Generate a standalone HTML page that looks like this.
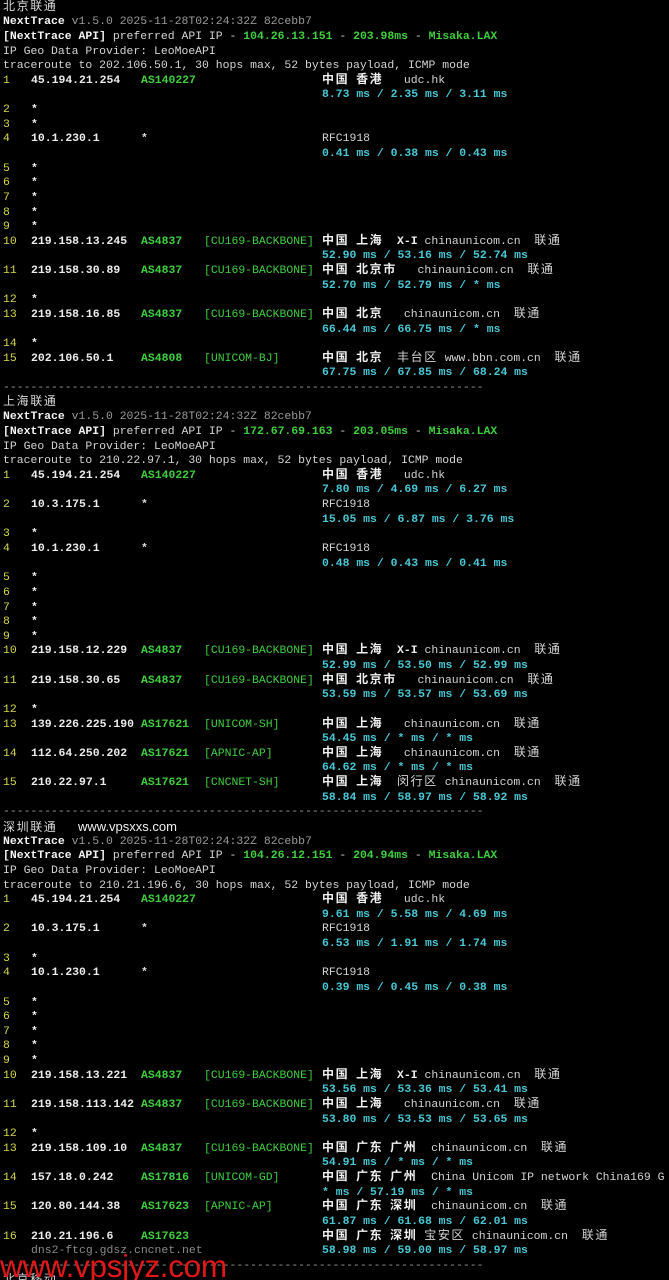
<!DOCTYPE html>
<html><head><meta charset="utf-8">
<style>
html,body{margin:0;padding:0;background:#000;width:669px;height:1280px;overflow:hidden}
body{position:relative;box-sizing:border-box;font-family:"Liberation Mono",monospace;font-size:11.45px;color:#d4d4d4}
.l{position:absolute;left:3px;height:14.63px;line-height:14.63px;white-space:pre;overflow:visible}
i{font-style:normal;font-family:"Noto Sans CJK SC",sans-serif;font-size:12px;letter-spacing:1.6px;line-height:0;vertical-align:baseline}
.t i{font-weight:normal;color:#d8d8d8}
.n,.ip,.as,.nt,.d{display:inline-block;line-height:14.63px;vertical-align:top}
.n{width:28px;color:#d6d64a}
.ip{width:110px;font-weight:bold;color:#ececec}
.as{width:63px;font-weight:bold;color:#3fcf3f}
.nt{width:118px;color:#3fcf3f}
.d{width:291px;color:#8a8a8a}
.geo{font-weight:bold;color:#f0f0f0}
.geo s{text-decoration:none;font-weight:normal;color:#d4d4d4}
.r{display:inline-block;padding-left:319px;color:#48c8d6;font-weight:bold;vertical-align:top}
.c{color:#48c8d6;font-weight:bold}
.b{font-weight:bold;color:#f4f4f4}
.g{color:#9a9a9a}
.G{color:#3fcf3f;font-weight:bold}
.dash{color:#9a9a9a}
.wm{position:absolute;left:0;top:1248px;font-family:"Liberation Sans",sans-serif;font-size:31.5px;color:#e01818;letter-spacing:-0.3px}
.vx{font-family:"Liberation Sans",sans-serif;font-size:13px;color:#f0f0f0}
</style></head><body>
<div class="l t"><i>北京联通</i></div>
<div class="l"><span class="b">NextTrace</span><span class="g"> v1.5.0 2025-11-28T02:24:32Z 82cebb7</span></div>
<div class="l"><span class="b">[NextTrace API]</span> preferred API IP - <span class="G">104.26.13.151</span> - <span class="G">203.98ms</span> - <span class="G">Misaka.LAX</span></div>
<div class="l">IP Geo Data Provider: LeoMoeAPI</div>
<div class="l">traceroute to 202.106.50.1, 30 hops max, 52 bytes payload, ICMP mode</div>
<div class="l"><span class="n">1</span><span class="ip">45.194.21.254</span><span class="as">AS140227</span><span class="nt"></span><span class="geo"><i>中国</i> <i>香港</i>   <s>udc.hk</s></span></div>
<div class="l"><span class="r">8.73 ms / 2.35 ms / 3.11 ms</span></div>
<div class="l"><span class="n">2</span><span class="ip">*</span></div>
<div class="l"><span class="n">3</span><span class="ip">*</span></div>
<div class="l"><span class="n">4</span><span class="ip">10.1.230.1</span><span class="as" style="color:#ddd">*</span><span class="nt"></span><span class="geo"><s>RFC1918</s></span></div>
<div class="l"><span class="r">0.41 ms / 0.38 ms / 0.43 ms</span></div>
<div class="l"><span class="n">5</span><span class="ip">*</span></div>
<div class="l"><span class="n">6</span><span class="ip">*</span></div>
<div class="l"><span class="n">7</span><span class="ip">*</span></div>
<div class="l"><span class="n">8</span><span class="ip">*</span></div>
<div class="l"><span class="n">9</span><span class="ip">*</span></div>
<div class="l"><span class="n">10</span><span class="ip">219.158.13.245</span><span class="as">AS4837</span><span class="nt">[CU169-BACKBONE]</span><span class="geo"><i>中国</i> <i>上海</i>  X-I <s>chinaunicom.cn  <i>联通</i></s></span></div>
<div class="l"><span class="r">52.90 ms / 53.16 ms / 52.74 ms</span></div>
<div class="l"><span class="n">11</span><span class="ip">219.158.30.89</span><span class="as">AS4837</span><span class="nt">[CU169-BACKBONE]</span><span class="geo"><i>中国</i> <i>北京市</i>   <s>chinaunicom.cn  <i>联通</i></s></span></div>
<div class="l"><span class="r">52.70 ms / 52.79 ms / * ms</span></div>
<div class="l"><span class="n">12</span><span class="ip">*</span></div>
<div class="l"><span class="n">13</span><span class="ip">219.158.16.85</span><span class="as">AS4837</span><span class="nt">[CU169-BACKBONE]</span><span class="geo"><i>中国</i> <i>北京</i>   <s>chinaunicom.cn  <i>联通</i></s></span></div>
<div class="l"><span class="r">66.44 ms / 66.75 ms / * ms</span></div>
<div class="l"><span class="n">14</span><span class="ip">*</span></div>
<div class="l"><span class="n">15</span><span class="ip">202.106.50.1</span><span class="as">AS4808</span><span class="nt">[UNICOM-BJ]</span><span class="geo"><i>中国</i> <i>北京</i>  <s><i>丰台区</i> www.bbn.com.cn  <i>联通</i></s></span></div>
<div class="l"><span class="r">67.75 ms / 67.85 ms / 68.24 ms</span></div>
<div class="l dash">----------------------------------------------------------------------</div>
<div class="l t"><i>上海联通</i></div>
<div class="l"><span class="b">NextTrace</span><span class="g"> v1.5.0 2025-11-28T02:24:32Z 82cebb7</span></div>
<div class="l"><span class="b">[NextTrace API]</span> preferred API IP - <span class="G">172.67.69.163</span> - <span class="G">203.05ms</span> - <span class="G">Misaka.LAX</span></div>
<div class="l">IP Geo Data Provider: LeoMoeAPI</div>
<div class="l">traceroute to 210.22.97.1, 30 hops max, 52 bytes payload, ICMP mode</div>
<div class="l"><span class="n">1</span><span class="ip">45.194.21.254</span><span class="as">AS140227</span><span class="nt"></span><span class="geo"><i>中国</i> <i>香港</i>   <s>udc.hk</s></span></div>
<div class="l"><span class="r">7.80 ms / 4.69 ms / 6.27 ms</span></div>
<div class="l"><span class="n">2</span><span class="ip">10.3.175.1</span><span class="as" style="color:#ddd">*</span><span class="nt"></span><span class="geo"><s>RFC1918</s></span></div>
<div class="l"><span class="r">15.05 ms / 6.87 ms / 3.76 ms</span></div>
<div class="l"><span class="n">3</span><span class="ip">*</span></div>
<div class="l"><span class="n">4</span><span class="ip">10.1.230.1</span><span class="as" style="color:#ddd">*</span><span class="nt"></span><span class="geo"><s>RFC1918</s></span></div>
<div class="l"><span class="r">0.48 ms / 0.43 ms / 0.41 ms</span></div>
<div class="l"><span class="n">5</span><span class="ip">*</span></div>
<div class="l"><span class="n">6</span><span class="ip">*</span></div>
<div class="l"><span class="n">7</span><span class="ip">*</span></div>
<div class="l"><span class="n">8</span><span class="ip">*</span></div>
<div class="l"><span class="n">9</span><span class="ip">*</span></div>
<div class="l"><span class="n">10</span><span class="ip">219.158.12.229</span><span class="as">AS4837</span><span class="nt">[CU169-BACKBONE]</span><span class="geo"><i>中国</i> <i>上海</i>  X-I <s>chinaunicom.cn  <i>联通</i></s></span></div>
<div class="l"><span class="r">52.99 ms / 53.50 ms / 52.99 ms</span></div>
<div class="l"><span class="n">11</span><span class="ip">219.158.30.65</span><span class="as">AS4837</span><span class="nt">[CU169-BACKBONE]</span><span class="geo"><i>中国</i> <i>北京市</i>   <s>chinaunicom.cn  <i>联通</i></s></span></div>
<div class="l"><span class="r">53.59 ms / 53.57 ms / 53.69 ms</span></div>
<div class="l"><span class="n">12</span><span class="ip">*</span></div>
<div class="l"><span class="n">13</span><span class="ip">139.226.225.190</span><span class="as">AS17621</span><span class="nt">[UNICOM-SH]</span><span class="geo"><i>中国</i> <i>上海</i>   <s>chinaunicom.cn  <i>联通</i></s></span></div>
<div class="l"><span class="r">54.45 ms / * ms / * ms</span></div>
<div class="l"><span class="n">14</span><span class="ip">112.64.250.202</span><span class="as">AS17621</span><span class="nt">[APNIC-AP]</span><span class="geo"><i>中国</i> <i>上海</i>   <s>chinaunicom.cn  <i>联通</i></s></span></div>
<div class="l"><span class="r">64.62 ms / * ms / * ms</span></div>
<div class="l"><span class="n">15</span><span class="ip">210.22.97.1</span><span class="as">AS17621</span><span class="nt">[CNCNET-SH]</span><span class="geo"><i>中国</i> <i>上海</i>  <s><i>闵行区</i> chinaunicom.cn  <i>联通</i></s></span></div>
<div class="l"><span class="r">58.84 ms / 58.97 ms / 58.92 ms</span></div>
<div class="l dash">----------------------------------------------------------------------</div>
<div class="l t"><i>深圳联通</i>   <span class="vx">www.vpsxxs.com</span></div>
<div class="l"><span class="b">NextTrace</span><span class="g"> v1.5.0 2025-11-28T02:24:32Z 82cebb7</span></div>
<div class="l"><span class="b">[NextTrace API]</span> preferred API IP - <span class="G">104.26.12.151</span> - <span class="G">204.94ms</span> - <span class="G">Misaka.LAX</span></div>
<div class="l">IP Geo Data Provider: LeoMoeAPI</div>
<div class="l">traceroute to 210.21.196.6, 30 hops max, 52 bytes payload, ICMP mode</div>
<div class="l"><span class="n">1</span><span class="ip">45.194.21.254</span><span class="as">AS140227</span><span class="nt"></span><span class="geo"><i>中国</i> <i>香港</i>   <s>udc.hk</s></span></div>
<div class="l"><span class="r">9.61 ms / 5.58 ms / 4.69 ms</span></div>
<div class="l"><span class="n">2</span><span class="ip">10.3.175.1</span><span class="as" style="color:#ddd">*</span><span class="nt"></span><span class="geo"><s>RFC1918</s></span></div>
<div class="l"><span class="r">6.53 ms / 1.91 ms / 1.74 ms</span></div>
<div class="l"><span class="n">3</span><span class="ip">*</span></div>
<div class="l"><span class="n">4</span><span class="ip">10.1.230.1</span><span class="as" style="color:#ddd">*</span><span class="nt"></span><span class="geo"><s>RFC1918</s></span></div>
<div class="l"><span class="r">0.39 ms / 0.45 ms / 0.38 ms</span></div>
<div class="l"><span class="n">5</span><span class="ip">*</span></div>
<div class="l"><span class="n">6</span><span class="ip">*</span></div>
<div class="l"><span class="n">7</span><span class="ip">*</span></div>
<div class="l"><span class="n">8</span><span class="ip">*</span></div>
<div class="l"><span class="n">9</span><span class="ip">*</span></div>
<div class="l"><span class="n">10</span><span class="ip">219.158.13.221</span><span class="as">AS4837</span><span class="nt">[CU169-BACKBONE]</span><span class="geo"><i>中国</i> <i>上海</i>  X-I <s>chinaunicom.cn  <i>联通</i></s></span></div>
<div class="l"><span class="r">53.56 ms / 53.36 ms / 53.41 ms</span></div>
<div class="l"><span class="n">11</span><span class="ip">219.158.113.142</span><span class="as">AS4837</span><span class="nt">[CU169-BACKBONE]</span><span class="geo"><i>中国</i> <i>上海</i>   <s>chinaunicom.cn  <i>联通</i></s></span></div>
<div class="l"><span class="r">53.80 ms / 53.53 ms / 53.65 ms</span></div>
<div class="l"><span class="n">12</span><span class="ip">*</span></div>
<div class="l"><span class="n">13</span><span class="ip">219.158.109.10</span><span class="as">AS4837</span><span class="nt">[CU169-BACKBONE]</span><span class="geo"><i>中国</i> <i>广东</i> <i>广州</i>  <s>chinaunicom.cn  <i>联通</i></s></span></div>
<div class="l"><span class="r">54.91 ms / * ms / * ms</span></div>
<div class="l"><span class="n">14</span><span class="ip">157.18.0.242</span><span class="as">AS17816</span><span class="nt">[UNICOM-GD]</span><span class="geo"><i>中国</i> <i>广东</i> <i>广州</i>  <s>China Unicom IP network China169 G</s></span></div>
<div class="l"><span class="r">* ms / 57.19 ms / * ms</span></div>
<div class="l"><span class="n">15</span><span class="ip">120.80.144.38</span><span class="as">AS17623</span><span class="nt">[APNIC-AP]</span><span class="geo"><i>中国</i> <i>广东</i> <i>深圳</i>  <s>chinaunicom.cn  <i>联通</i></s></span></div>
<div class="l"><span class="r">61.87 ms / 61.68 ms / 62.01 ms</span></div>
<div class="l"><span class="n">16</span><span class="ip">210.21.196.6</span><span class="as">AS17623</span><span class="nt"></span><span class="geo"><i>中国</i> <i>广东</i> <i>深圳</i> <s><i>宝安区</i> chinaunicom.cn  <i>联通</i></s></span></div>
<div class="l"><span class="n"></span><span class="d">dns2-ftcg.gdsz.cncnet.net</span><span class="c">58.98 ms / 59.00 ms / 58.97 ms</span></div>
<div class="l dash">----------------------------------------------------------------------</div>
<div class="l t"><i>北京移动</i></div>
<div class="wm">www.vpsjyz.com</div>
<script>
var ls=document.querySelectorAll('.l');for(var k=0;k<ls.length;k++){ls[k].style.top=(0.7+k*14.63)+'px';}
</script>
</body></html>
